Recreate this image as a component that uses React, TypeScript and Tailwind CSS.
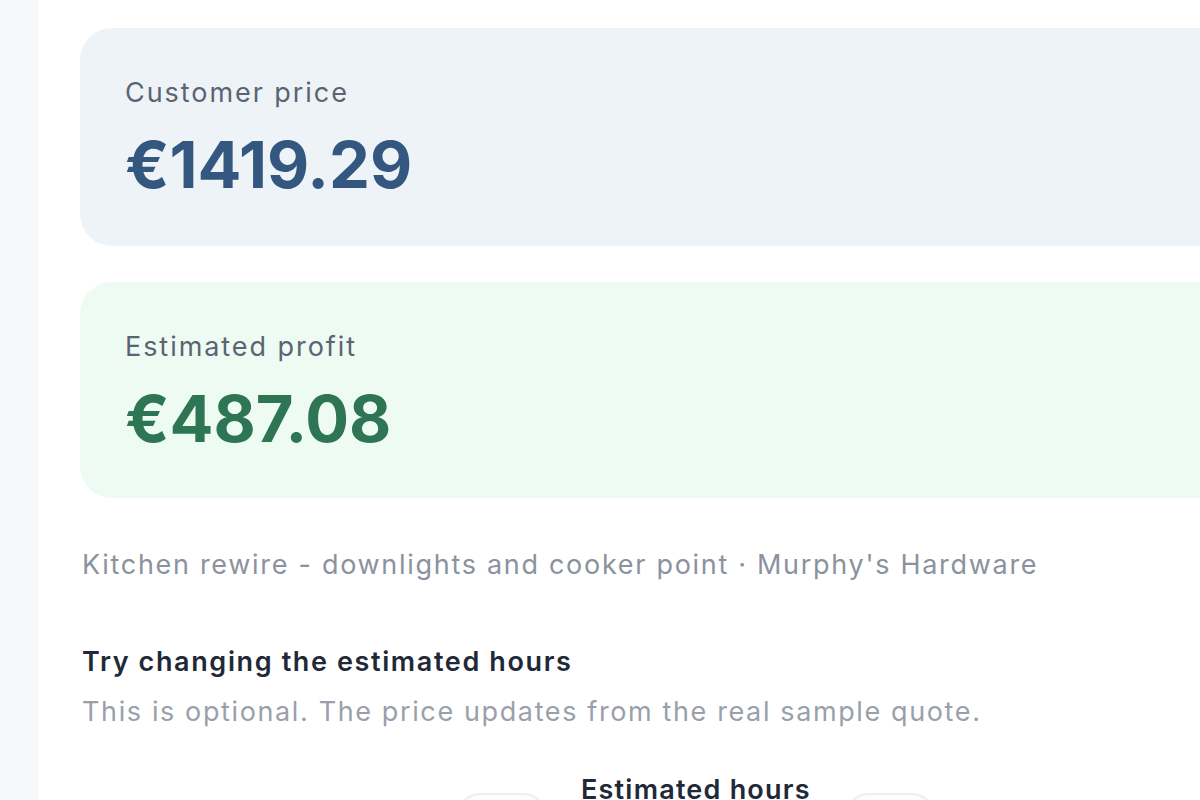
export default function App() {
  return (
    <div
      className="flex h-[800px] w-[1200px] overflow-hidden bg-white"
      style={{ fontFamily: "Inter, 'Liberation Sans', sans-serif" }}
    >
      {/* side rail */}
      <div className="w-[38px] shrink-0 bg-[#f6f8fa]" />

      <main className="flex-1 pl-[42px] pt-[28px]">
        <div className="w-[1200px]">
          {/* price card */}
          <div className="h-[218px] rounded-[32px] bg-[#eef3f7] pl-[45px] pt-[47px]">
            <p className="text-[27px] leading-[36px] tracking-[0.072em] text-[#5b6472]">Customer price</p>
            <p className="mt-[21px] text-[65px] font-bold leading-[65px] text-[#34577f]">€1419.29</p>
          </div>

          {/* profit card */}
          <div className="mt-[36px] h-[216px] rounded-[32px] bg-[#edfbf3] pl-[45px] pt-[47px]">
            <p className="text-[27px] leading-[36px] tracking-[0.072em] text-[#5b6472]">Estimated profit</p>
            <p className="mt-[21px] text-[65px] font-bold leading-[65px] text-[#2e7553]">€487.08</p>
          </div>
        </div>

        <p className="mt-[49px] pl-[2px] text-[27px] leading-[36px] tracking-[0.063em] text-[#8b929e]">
          Kitchen rewire - downlights and cooker point · Murphy's Hardware
        </p>

        <div className="mt-[61px] pl-[2px]">
          <p className="text-[27px] font-semibold leading-[36px] tracking-[0.06em] text-[#1f2937]">
            Try changing the estimated hours
          </p>
          <p className="mt-[14px] text-[27px] leading-[36px] tracking-[0.06em] text-[#9aa0aa]">
            This is optional. The price updates from the real sample quote.
          </p>
        </div>

        {/* hours stepper */}
        <div className="ml-[378px] mt-[42px] flex items-start gap-[35px]">
          <button className="mt-[21px] h-[90px] w-[88px] shrink-0 rounded-[22px] border-2 border-[#eceef1] bg-[#fcfcfd]" />
          <p className="text-[27px] font-semibold leading-[36px] tracking-[0.045em] text-[#1f2937]">
            Estimated hours
          </p>
          <button className="mt-[21px] h-[90px] w-[88px] shrink-0 rounded-[22px] border-2 border-[#eceef1] bg-[#fcfcfd]" />
        </div>
      </main>
    </div>
  );
}
